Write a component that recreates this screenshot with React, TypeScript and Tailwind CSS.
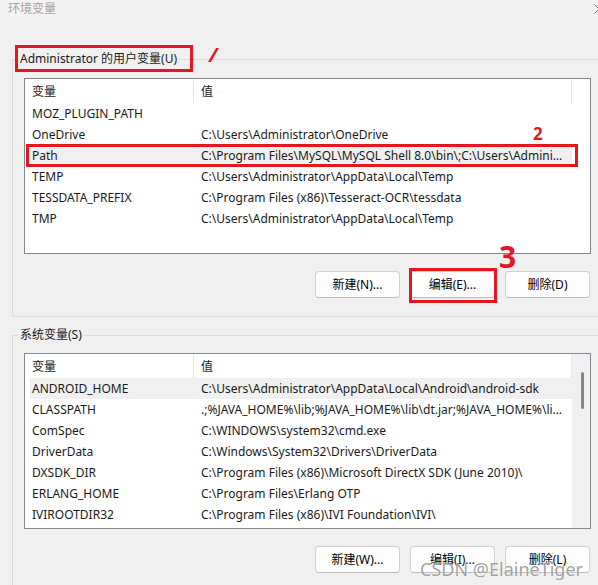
import React from 'react';

const userVars: [string, string][] = [
  ['MOZ_PLUGIN_PATH', ''],
  ['OneDrive', 'C:\\Users\\Administrator\\OneDrive'],
  ['Path', 'C:\\Program Files\\MySQL\\MySQL Shell 8.0\\bin\\;C:\\Users\\Administrator\\AppData\\Local\\Microsoft\\WindowsApps'],
  ['TEMP', 'C:\\Users\\Administrator\\AppData\\Local\\Temp'],
  ['TESSDATA_PREFIX', 'C:\\Program Files (x86)\\Tesseract-OCR\\tessdata'],
  ['TMP', 'C:\\Users\\Administrator\\AppData\\Local\\Temp'],
];

const sysVars: [string, string][] = [
  ['ANDROID_HOME', 'C:\\Users\\Administrator\\AppData\\Local\\Android\\android-sdk'],
  ['CLASSPATH', '.;%JAVA_HOME%\\lib;%JAVA_HOME%\\lib\\dt.jar;%JAVA_HOME%\\lib\\tools.jar'],
  ['ComSpec', 'C:\\WINDOWS\\system32\\cmd.exe'],
  ['DriverData', 'C:\\Windows\\System32\\Drivers\\DriverData'],
  ['DXSDK_DIR', 'C:\\Program Files (x86)\\Microsoft DirectX SDK (June 2010)\\'],
  ['ERLANG_HOME', 'C:\\Program Files\\Erlang OTP'],
  ['IVIROOTDIR32', 'C:\\Program Files (x86)\\IVI Foundation\\IVI\\'],
];

function Row({ name, value, selected, marked }: { name: string; value: string; selected?: boolean; marked?: boolean }) {
  return (
    <div className={`relative flex h-[21px] w-[542px] shrink-0 items-center pt-[1px] ${selected ? 'bg-[#f0f0f0]' : ''}`}>
      <div className="w-[164px] shrink-0 truncate pl-[2px]">{name}</div>
      <div className="min-w-0 flex-1 truncate pl-[7px] pr-[6px]">{value}</div>
      {marked && (
        <>
          <span className="absolute -left-[4px] -right-[6px] -top-[1px] -bottom-[1px] border-[3px] border-[#e4161f]" />
          <span className="absolute left-[503px] -top-[20px] text-[17px] font-bold leading-none text-[#e4161f]">2</span>
        </>
      )}
    </div>
  );
}

function VarList({ rows, selectedIndex, markedIndex, scroll }: { rows: [string, string][]; selectedIndex: number; markedIndex?: number; scroll?: boolean }) {
  return (
    <div className="flex h-[176px] w-[567px] overflow-hidden border border-[#828790] bg-white">
      <div className="flex w-[547px] shrink-0 flex-col pl-[5px]">
        <div className="flex h-[24px] w-[542px] shrink-0 items-stretch pt-[1px]">
          <div className="flex w-[164px] items-center border-r border-[#e5e5e5] pl-[2px]">变量</div>
          <div className="flex flex-1 items-center border-r border-[#e5e5e5] pl-[7px]">值</div>
        </div>
        {rows.map(([n, v], i) => (
          <Row key={n} name={n} value={v} selected={i === selectedIndex} marked={i === markedIndex} />
        ))}
      </div>
      {scroll && (
        <div className="flex w-[18px] shrink-0 justify-center bg-[#f0f0f0] pt-[18px]">
          <div className="ml-[2px] h-[37px] w-[3px] rounded-full bg-[#858585]" />
        </div>
      )}
    </div>
  );
}

function Button({ label, marked }: { label: string; marked?: boolean }) {
  return (
    <button className="relative flex h-[27px] w-[85px] items-center justify-center rounded-[4px] border border-[#d0d0d0] border-b-[#bcbcbc] bg-[#fdfdfd] text-black">
      {label}
      {marked && (
        <>
          <span className="absolute -left-[2px] -right-[3px] -top-[4px] -bottom-[6px] border-[3px] border-[#e4161f]" />
          <span className="absolute left-[88px] -top-[30px] text-[30px] font-bold leading-none text-[#e4161f]">3</span>
        </>
      )}
    </button>
  );
}

export default function App() {
  return (
    <div
      className="relative h-[585px] w-[598px] overflow-hidden bg-[#f0f0f0] text-[12px] text-[#1a1a1a]"
      style={{ fontFamily: '"Noto Sans", "Noto Sans CJK SC", sans-serif' }}
    >
      {/* title bar */}
      <div className="flex h-[25px] items-start justify-between bg-[#f3f3f3] pl-[8px] pt-[1px]">
        <span className="text-[12px] leading-[16px] text-[#a3a3a3]">环境变量</span>
        <svg width="10" height="10" viewBox="0 0 10 10" className="-mr-[6px] mt-[3px]">
          <path d="M0.5 0.5 L9.5 9.5 M9.5 0.5 L0.5 9.5" stroke="#7a7a7a" strokeWidth="1" />
        </svg>
      </div>

      {/* user variables */}
      <fieldset className="ml-[12px] mt-[25px] w-[600px] border border-[#dcdcdc] pb-[18px] pl-[11px]">
        <legend className="relative -ml-[6px] px-[2px] leading-[18px]">
          Administrator 的用户变量(U)
          <span className="absolute -left-[3px] -top-[5px] h-[27px] w-[178px] border-[3px] border-[#e4161f]" />
          <span className="absolute left-[191px] -top-[5px] text-[20px] font-bold italic leading-none text-[#e4161f]">/</span>
        </legend>
        <div className="mt-[10px]">
          <VarList rows={userVars} selectedIndex={2} markedIndex={2} />
        </div>
        <div className="ml-[291px] mt-[17px] flex gap-[10px]">
          <Button label="新建(N)..." />
          <Button label="编辑(E)..." marked />
          <Button label="删除(D)" />
        </div>
      </fieldset>

      {/* system variables */}
      <fieldset className="ml-[12px] mt-[9px] w-[600px] border border-[#dcdcdc] pb-[18px] pl-[11px]">
        <legend className="-ml-[6px] px-[2px] leading-[18px]">系统变量(S)</legend>
        <div className="mt-[9px]">
          <VarList rows={sysVars} selectedIndex={0} scroll />
        </div>
        <div className="ml-[291px] mt-[17px] flex gap-[10px]">
          <Button label="新建(W)..." />
          <Button label="编辑(I)..." />
          <Button label="删除(L)" />
        </div>
      </fieldset>

      {/* watermark */}
      <span
        className="pointer-events-none absolute bottom-[7px] right-[15px] text-[18px] leading-none text-[#8a8a8a]/80"
        style={{ textShadow: '0 0 2px #fff' }}
      >
        CSDN @ElaineTiger
      </span>
    </div>
  );
}
